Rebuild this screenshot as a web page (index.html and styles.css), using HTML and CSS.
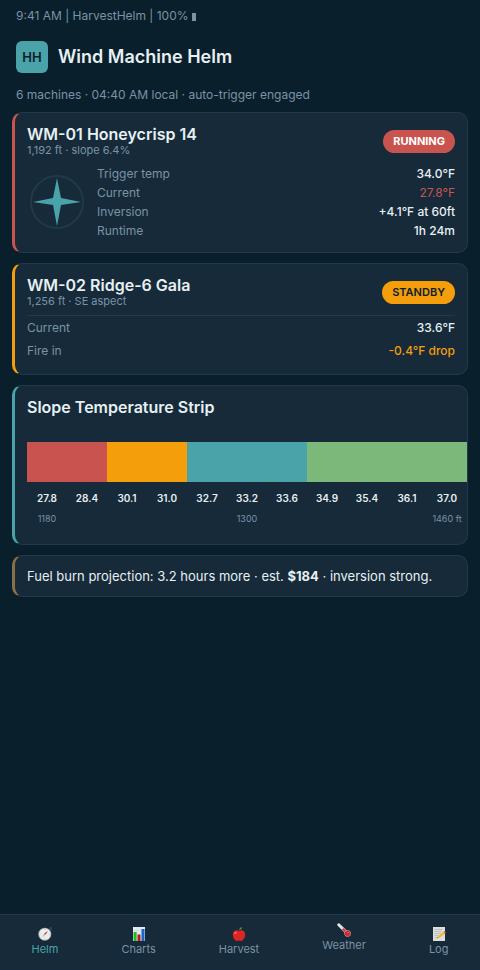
FILE: index.html
```html
<!DOCTYPE html>
<html lang="en">
<head>
<meta charset="utf-8">
<meta name="viewport" content="width=device-width, initial-scale=1">
<title>Wind Machine Helm</title>
<link rel="stylesheet" href="styles.css">
</head>
<body>
<div class="status">9:41 AM | HarvestHelm | 100% <span class="battery"></span></div>
<header class="header">
  <div class="logo">HH</div>
  <h1 class="title">Wind Machine Helm</h1>
</header>
<p class="summary">6 machines · 04:40 AM local · auto-trigger engaged</p>

<main class="cards">
  <section class="card card-running">
    <div class="card-head">
      <div>
        <h2 class="card-title">WM-01 Honeycrisp 14</h2>
        <p class="card-sub">1,192 ft · slope 6.4%</p>
      </div>
      <span class="badge badge-running">RUNNING</span>
    </div>
    <div class="machine">
      <svg class="rotor" viewBox="0 0 60 60" aria-hidden="true">
        <circle cx="30" cy="30" r="26" fill="none" stroke="#203a4b" stroke-width="2"/>
        <path d="M30 6 34 26 54 30 34 33 30 54 26 33 6 30 26 26Z" fill="#4aa3a8"/>
        <circle cx="30" cy="30" r="4" fill="#4aa3a8"/>
      </svg>
      <dl class="stats">
        <div class="stat"><dt>Trigger temp</dt><dd>34.0°F</dd></div>
        <div class="stat"><dt>Current</dt><dd class="cold">27.8°F</dd></div>
        <div class="stat"><dt>Inversion</dt><dd>+4.1°F at 60ft</dd></div>
        <div class="stat"><dt>Runtime</dt><dd>1h 24m</dd></div>
      </dl>
    </div>
  </section>

  <section class="card card-standby">
    <div class="card-head">
      <div>
        <h2 class="card-title">WM-02 Ridge-6 Gala</h2>
        <p class="card-sub">1,256 ft · SE aspect</p>
      </div>
      <span class="badge badge-standby">STANDBY</span>
    </div>
    <dl class="stats stats-ruled">
      <div class="stat"><dt>Current</dt><dd>33.6°F</dd></div>
      <div class="stat"><dt>Fire in</dt><dd class="warn">-0.4°F drop</dd></div>
    </dl>
  </section>

  <section class="card card-strip">
    <h2 class="card-title">Slope Temperature Strip</h2>
    <div class="strip">
      <div class="band band-red"></div>
      <div class="band band-orange"></div>
      <div class="band band-teal"></div>
      <div class="band band-green"></div>
      <span class="temp">27.8</span><span class="temp">28.4</span><span class="temp">30.1</span><span class="temp">31.0</span><span class="temp">32.7</span><span class="temp">33.2</span><span class="temp">33.6</span><span class="temp">34.9</span><span class="temp">35.4</span><span class="temp">36.1</span><span class="temp">37.0</span>
      <span class="feet feet-low">1180</span><span class="feet feet-mid">1300</span><span class="feet feet-high">1460 ft</span>
    </div>
  </section>

  <section class="card card-fuel">
    <p class="fuel">Fuel burn projection: 3.2 hours more · est. <strong>$184</strong> · inversion strong.</p>
  </section>
</main>

<nav class="tabs">
  <a class="tab tab-active" href="#helm">
    <svg class="tab-icon" viewBox="0 0 14 14" aria-hidden="true">
      <circle cx="12.6" cy="1.6" r="1" fill="none" stroke="#4c6273" stroke-width=".7"/>
      <circle cx="6.8" cy="7.2" r="6.5" fill="#a3a9ac"/>
      <circle cx="6.8" cy="7.2" r="5.7" fill="#eceeee"/>
      <path d="M6.8 2v1M6.8 11.4v1M1.7 7.2h1M10.9 7.2h1" stroke="#9ba3a7" stroke-width=".6"/>
      <path d="M9.9 3.9 7.6 7.8 6.1 6.4Z" fill="#e02f2f"/>
      <path d="M3.9 10.5 6.1 6.4 7.6 7.8Z" fill="#b6bbbf"/>
    </svg>
    Helm
  </a>
  <a class="tab" href="#charts">
    <svg class="tab-icon" viewBox="0 0 14 14" aria-hidden="true">
      <path d="M1 0h12v14H1z" fill="#e3edf1"/>
      <path d="M1 3.5h12M1 7h12M1 10.5h12M5 0v14M9 0v14" stroke="#bfcbd2" stroke-width=".4"/>
      <path d="M1.6 5h3v9h-3z" fill="#16bf24"/>
      <path d="M5.5 7.5h3V14h-3z" fill="#c4161c"/>
      <path d="M9.5 2h3v12h-3z" fill="#1c62cf"/>
    </svg>
    Charts
  </a>
  <a class="tab" href="#harvest">
    <svg class="tab-icon" viewBox="0 0 14 14" aria-hidden="true">
      <path d="M7 4C5 2.6.8 3 .8 7.6c0 3 2 6.3 4.1 6.3.9 0 1.3-.3 2.1-.3s1.2.3 2.1.3c2.100 0 4.100-3.300 4.100-6.300C13.200 3 9 2.600 7 4Z" fill="#dd2525"/>
      <path d="M2.300 7c0-1.600 1.200-2.600 2.500-2.300C4.500 6 3.500 7.500 2.300 7Z" fill="#ff7f74"/>
      <path d="M7 4.700C6.900 3.500 7.200 2.400 8 1.500" fill="none" stroke="#5c4527" stroke-width=".8"/>
      <path d="M7.400 2.700C7.500 1 8.600.2 10.100.2 10.100 1.800 9 2.700 7.400 2.700Z" fill="#55a32b"/>
    </svg>
    Harvest
  </a>
  <a class="tab tab-weather" href="#weather">
    <svg class="tab-icon" viewBox="0 0 14 14" aria-hidden="true">
      <path d="M1.800 1.800 10.300 10.200" stroke="#e6eaec" stroke-width="3" stroke-linecap="round"/>
      <path d="M5.700 5.700 10 10" stroke="#d8333a" stroke-width="2"/>
      <path d="M3.800 2.300 3 3.100M5.400 3.900l-.8.800M7 5.500l-.8.800" stroke="#7b868e" stroke-width=".5"/>
      <circle cx="10.600" cy="10.500" r="3.200" fill="#b9a5aa"/>
      <circle cx="10.600" cy="10.500" r="2.700" fill="#d8232c"/>
      <circle cx="11.200" cy="9.800" r=".6" fill="#f5898b"/>
    </svg>
    Weather
  </a>
  <a class="tab" href="#log">
    <svg class="tab-icon" viewBox="0 0 14 14" aria-hidden="true">
      <path d="M1 0h12v14H1z" fill="#dedfdc"/>
      <path d="M2.500 2.500h8M2.500 4.500h7M2.500 6.500h6M2.500 8.500h3.500M2.500 10.500h3" stroke="#a5a9aa" stroke-width=".6"/>
      <path d="M5.200 11.300 6 8.900 11.300 4.900 12.900 6.700 7.600 10.700Z" fill="#f6bd20"/>
      <path d="M11.300 4.900 12.500 4 14 5.800 12.900 6.700Z" fill="#e2605f"/>
      <path d="M5.200 11.300 6 8.900 7.600 10.700Z" fill="#d9b98a"/>
      <path d="M5.200 11.300 5.500 10.300 6.200 11Z" fill="#333"/>
    </svg>
    Log
  </a>
</nav>
</body>
</html>
```
FILE: styles.css
```css
* {
  box-sizing: border-box;
  margin: 0;
}

body {
  display: flex;
  flex-direction: column;
  min-height: 100vh;
  background: #0a1f2c;
  color: #e6f0f3;
  font-family: Inter, "Liberation Sans", sans-serif;
  font-size: 12px;
  line-height: 15px;
}

.status {
  padding: 8px 16px;
  line-height: 16px;
  color: #7a93a5;
}

.battery {
  display: inline-block;
  width: 4px;
  height: 8px;
  vertical-align: -1px;
  background: #7a93a5;
}

.header {
  display: flex;
  align-items: center;
  gap: 10px;
  padding: 9px 16px 12px;
}

.logo {
  display: grid;
  place-items: center;
  width: 32px;
  height: 32px;
  border-radius: 6px;
  background: #4aa3a8;
  color: #0a1f2c;
  font-size: 13px;
  font-weight: 600;
}

.title {
  font-size: 18px;
  font-weight: 600;
  line-height: 24px;
}

.summary {
  padding: 2px 16px 10px;
  color: #7a93a5;
}

.cards {
  display: flex;
  flex-direction: column;
  gap: 10px;
  padding: 0 12px;
}

.card {
  padding: 12px;
  border: 1px solid #203a4b;
  border-left-width: 3px;
  border-radius: 10px;
  background: #162a3a;
}

.card-running { border-left-color: #c9544f; }
.card-standby { border-left-color: #f59e0b; }
.card-strip { border-left-color: #4aa3a8; }
.card-fuel { border-left-color: #8b6f47; }

.card-head {
  display: flex;
  justify-content: space-between;
  align-items: center;
}

.card-title {
  font-size: 16px;
  font-weight: 600;
  line-height: 18px;
}

.card-sub {
  font-size: 11px;
  line-height: 14px;
  color: #7a93a5;
}

.badge {
  padding: 4px 10px;
  border-radius: 20px;
  font-size: 11px;
  font-weight: 700;
  line-height: 15px;
}

.badge-running {
  background: #c9544f;
  color: #fff;
}

.badge-standby {
  background: #f59e0b;
  color: #0a1f2c;
  font-weight: 600;
}

.machine {
  display: flex;
  align-items: center;
  gap: 10px;
  margin-top: 7px;
  padding: 2px 0;
}

.rotor {
  width: 60px;
  height: 60px;
}

.stats {
  display: flex;
  flex: 1;
  flex-direction: column;
  gap: 4px;
}

.stat {
  display: flex;
  justify-content: space-between;
}

.stat dt { color: #7a93a5; }

.stat dd { font-weight: 500; }

.stat .cold {
  color: #c9544f;
  font-weight: 400;
}

.stat .warn { color: #f59e0b; }

.stats-ruled {
  gap: 8px;
  margin-top: 7px;
  padding: 4px 0;
  border-top: 1px solid #203a4b;
}

.strip {
  display: grid;
  grid-template-columns: repeat(11, 1fr);
  margin: 26px -12px 6px 0;
}

.band { height: 40px; }

.band-red {
  grid-column: span 2;
  background: #c9544f;
}

.band-orange {
  grid-column: span 2;
  background: #f59e0b;
}

.band-teal {
  grid-column: span 3;
  background: #4aa3a8;
}

.band-green {
  grid-column: span 4;
  background: #7cb87a;
}

.temp {
  padding-top: 8px;
  font-size: 10px;
  font-weight: 600;
  line-height: 16px;
  text-align: center;
}

.feet {
  padding-top: 6px;
  color: #7a93a5;
  font-size: 9px;
  line-height: 14px;
  text-align: center;
  white-space: nowrap;
}

.feet-low { grid-column: 1; }
.feet-mid { grid-column: 6; }
.feet-high { grid-column: 11; }

.fuel {
  font-size: 13px;
  line-height: 16px;
}

.tabs {
  display: flex;
  justify-content: space-around;
  align-items: center;
  height: 56px;
  margin-top: auto;
  border-top: 1px solid #203a4b;
  background: #162a3a;
}

.tab {
  display: flex;
  flex-direction: column;
  align-items: center;
  color: #7a93a5;
  font-size: 11px;
  line-height: 17px;
  text-decoration: none;
}

.tab-active { color: #4aa3a8; }

.tab-weather { padding-bottom: 8px; }

.tab-icon {
  width: 14px;
  height: 14px;
}
```
